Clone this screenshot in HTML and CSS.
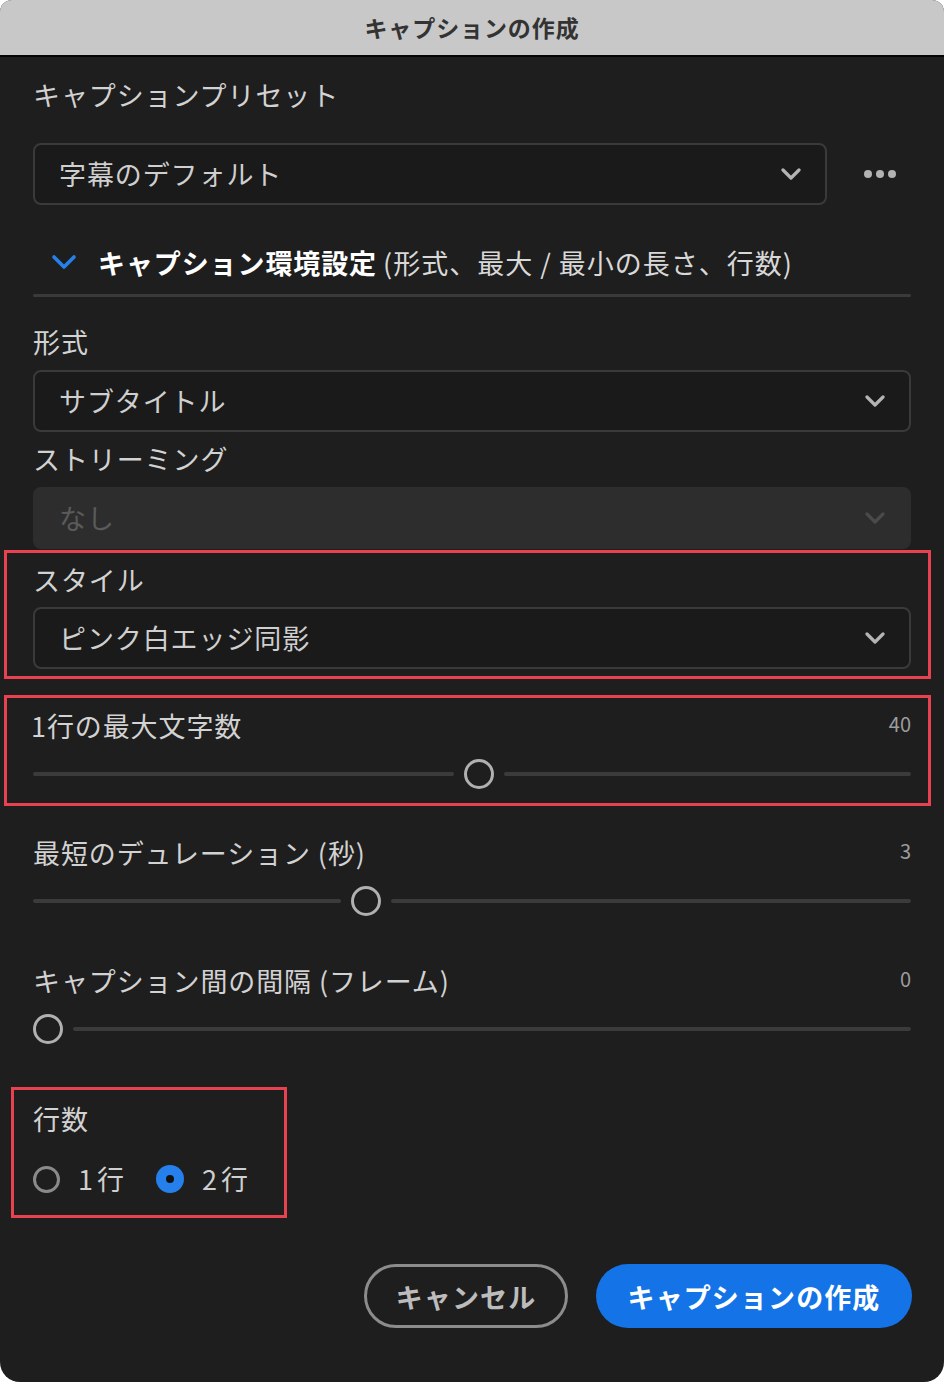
FILE: index.html
```html
<!DOCTYPE html>
<html lang="ja">
<head>
<meta charset="utf-8">
<title>キャプションの作成</title>
<link rel="stylesheet" href="styles.css">
</head>
<body>
<div class="dialog">
  <div class="titlebar">キャプションの作成</div>
  <div class="content">
    <div class="label l-preset">キャプションプリセット</div>
    <div class="preset-row">
      <div class="select preset-select">
        <span class="select-text">字幕のデフォルト</span>
        <svg class="chev" width="20" height="12" viewBox="0 0 20 12"><path d="M2 2 L10 10 L18 2" fill="none" stroke="#b4b4b4" stroke-width="3.2" stroke-linecap="round" stroke-linejoin="round"/></svg>
      </div>
      <div class="dots"><span></span><span></span><span></span></div>
    </div>

    <div class="disclosure">
      <svg class="disc-chev" width="26" height="16" viewBox="0 0 26 16"><path d="M3 3 L13 13 L23 3" fill="none" stroke="#2680eb" stroke-width="3.6" stroke-linecap="round" stroke-linejoin="round"/></svg>
      <span class="disc-bold">キャプション環境設定</span><span class="disc-normal">(形式、最大 / 最小の長さ、行数)</span>
    </div>
    <div class="divider"></div>

    <div class="label l-format">形式</div>
    <div class="select full gap-s">
      <span class="select-text">サブタイトル</span>
      <svg class="chev" width="20" height="12" viewBox="0 0 20 12"><path d="M2 2 L10 10 L18 2" fill="none" stroke="#b4b4b4" stroke-width="3.2" stroke-linecap="round" stroke-linejoin="round"/></svg>
    </div>

    <div class="label l-stream">ストリーミング</div>
    <div class="select full disabled gap-s">
      <span class="select-text">なし</span>
      <svg class="chev" width="20" height="12" viewBox="0 0 20 12"><path d="M2 2 L10 10 L18 2" fill="none" stroke="#4a4a4a" stroke-width="3.2" stroke-linecap="round" stroke-linejoin="round"/></svg>
    </div>

    <div class="hl hl-style">
      <div class="label">スタイル</div>
      <div class="select full gap-s">
        <span class="select-text">ピンク白エッジ同影</span>
        <svg class="chev" width="20" height="12" viewBox="0 0 20 12"><path d="M2 2 L10 10 L18 2" fill="none" stroke="#b4b4b4" stroke-width="3.2" stroke-linecap="round" stroke-linejoin="round"/></svg>
      </div>
    </div>

    <div class="hl hl-max">
      <div class="field-head">
        <span class="label">1行の最大文字数</span>
        <span class="value">40</span>
      </div>
      <div class="slider">
        <div class="track" style="width:421px"></div>
        <div class="thumb"></div>
        <div class="track grow"></div>
      </div>
    </div>

    <div class="field f-dur">
      <div class="field-head">
        <span class="label">最短のデュレーション (秒)</span>
        <span class="value">3</span>
      </div>
      <div class="slider">
        <div class="track" style="width:308px"></div>
        <div class="thumb"></div>
        <div class="track grow"></div>
      </div>
    </div>

    <div class="field f-gap">
      <div class="field-head">
        <span class="label">キャプション間の間隔 (フレーム)</span>
        <span class="value">0</span>
      </div>
      <div class="slider">
        <div class="thumb"></div>
        <div class="track grow"></div>
      </div>
    </div>

    <div class="hl hl-lines">
      <div class="label">行数</div>
      <div class="radios">
        <div class="radio"><span class="rb"></span><span class="rl">1 行</span></div>
        <div class="radio"><span class="rb on"></span><span class="rl">2 行</span></div>
      </div>
    </div>

    <div class="buttons">
      <div class="btn btn-cancel">キャンセル</div>
      <div class="btn btn-primary">キャプションの作成</div>
    </div>
  </div>
</div>
</body>
</html>
```

FILE: styles.css
```css
html, body {
  margin: 0;
  padding: 0;
  background: #ffffff;
}
body {
  font-family: "Noto Sans CJK JP", "Noto Sans", sans-serif;
}
.dialog {
  width: 944px;
  height: 1382px;
  background: #1e1e1e;
  border-radius: 12px 12px 20px 20px;
  overflow: hidden;
  box-sizing: border-box;
}
.titlebar {
  height: 55px;
  background: #c8c8c8;
  border-bottom: 2px solid #050505;
  display: flex;
  align-items: center;
  justify-content: center;
  font-size: 23px;
  font-weight: 700;
  color: #333333;
  line-height: 1;
  letter-spacing: 0.9px;
}
.content {
  padding: 20px 33px 0 33px;
  display: flex;
  flex-direction: column;
}
.label {
  font-size: 27px;
  line-height: 36px;
  color: #d2d2d2;
  white-space: nowrap;
  letter-spacing: 0.9px;
}
.preset-row {
  display: flex;
  align-items: center;
  margin-top: 30px;
}
.select {
  box-sizing: border-box;
  height: 62px;
  border: 2px solid #3a3a3a;
  border-radius: 8px;
  background: #1a1a1a;
  display: flex;
  align-items: center;
  justify-content: space-between;
  padding: 0 24px 0 24px;
}
.select-text {
  font-size: 27px;
  color: #cfcfcf;
  line-height: 36px;
  letter-spacing: 0.9px;
}
.preset-select {
  width: 794px;
}
.full {
  width: 878px;
}
.gap-s {
  margin-top: 10px;
}
.dots {
  display: flex;
  gap: 4px;
  margin-left: 37px;
}
.dots span {
  width: 8px;
  height: 8px;
  border-radius: 50%;
  background: #b2b2b2;
}
.disclosure {
  display: flex;
  align-items: center;
  height: 40px;
  margin-top: 37px;
  margin-bottom: 1px;
  white-space: nowrap;
}
.disc-chev {
  margin-left: 18px;
  margin-right: 21px;
}
.disc-bold {
  font-size: 27px;
  font-weight: 700;
  color: #ffffff;
  margin-right: 6px;
  letter-spacing: 0.9px;
}
.disc-normal {
  font-size: 27px;
  color: #d8d8d8;
  letter-spacing: 1px;
}
.divider {
  height: 3px;
  background: #3a3a3a;
  border-radius: 2px;
  margin-top: 11px;
}
.l-format {
  margin-top: 27px;
}
.l-stream {
  margin-top: 9px;
}
.disabled {
  background: #2d2d2d;
  border-color: #2d2d2d;
}
.disabled .select-text {
  color: #5a5a5a;
}
.hl {
  border: 3px solid #e8414f;
  box-sizing: border-box;
}
.hl-style {
  margin-top: 1px;
  margin-left: -29px;
  width: 927px;
  padding: 9px 17px 7px 26px;
}
.hl-style .gap-s {
  margin-top: 9px;
}
.hl-max {
  margin-top: 16px;
  margin-left: -29px;
  width: 927px;
  padding: 10px 17px 14px 26px;
}
.hl-max .label {
  margin-left: -2px;
}
.field-head {
  display: flex;
  justify-content: space-between;
  align-items: baseline;
}
.value {
  font-size: 20px;
  color: #9c9c9c;
  position: relative;
  top: -5px;
}
.slider {
  display: flex;
  align-items: center;
  gap: 10px;
  height: 30px;
  margin-top: 15px;
}
.track {
  height: 4px;
  background: #3b3b3b;
  border-radius: 2px;
}
.track.grow {
  flex: 1;
}
.thumb {
  width: 30px;
  height: 30px;
  box-sizing: border-box;
  border: 3px solid #b0b0b0;
  border-radius: 50%;
  flex: none;
}
.f-dur {
  margin-top: 29px;
}
.f-gap {
  margin-top: 47px;
}
.hl-lines {
  margin-top: 43px;
  margin-left: -22px;
  width: 276px;
  padding: 11px 0 22px 19px;
}
.radios {
  display: flex;
  align-items: center;
  height: 28px;
  margin-top: 28px;
}
.radio {
  display: flex;
  align-items: center;
}
.radio + .radio {
  margin-left: 32px;
}
.rb {
  width: 27px;
  height: 27px;
  box-sizing: border-box;
  border: 3px solid #8a8a8a;
  border-radius: 50%;
  display: flex;
  align-items: center;
  justify-content: center;
}
.rb.on {
  width: 28px;
  height: 28px;
  border: none;
  background: #2680eb;
}
.rb.on::after {
  content: "";
  width: 8px;
  height: 8px;
  border-radius: 50%;
  background: #111111;
}
.rl {
  font-size: 27px;
  color: #cfcfcf;
  margin-left: 18px;
  line-height: 36px;
  word-spacing: -2px;
}
.buttons {
  display: flex;
  justify-content: flex-end;
  gap: 28px;
  margin-top: 46px;
  margin-right: -1px;
}
.btn {
  box-sizing: border-box;
  height: 64px;
  border-radius: 32px;
  display: flex;
  align-items: center;
  justify-content: center;
  font-size: 27px;
  font-weight: 700;
  white-space: nowrap;
  letter-spacing: 1.1px;
}
.btn-cancel {
  width: 204px;
  border: 3px solid #8c8c8c;
  color: #bcbcbc;
}
.btn-primary {
  width: 316px;
  background: #1473e6;
  color: #ffffff;
}
```
